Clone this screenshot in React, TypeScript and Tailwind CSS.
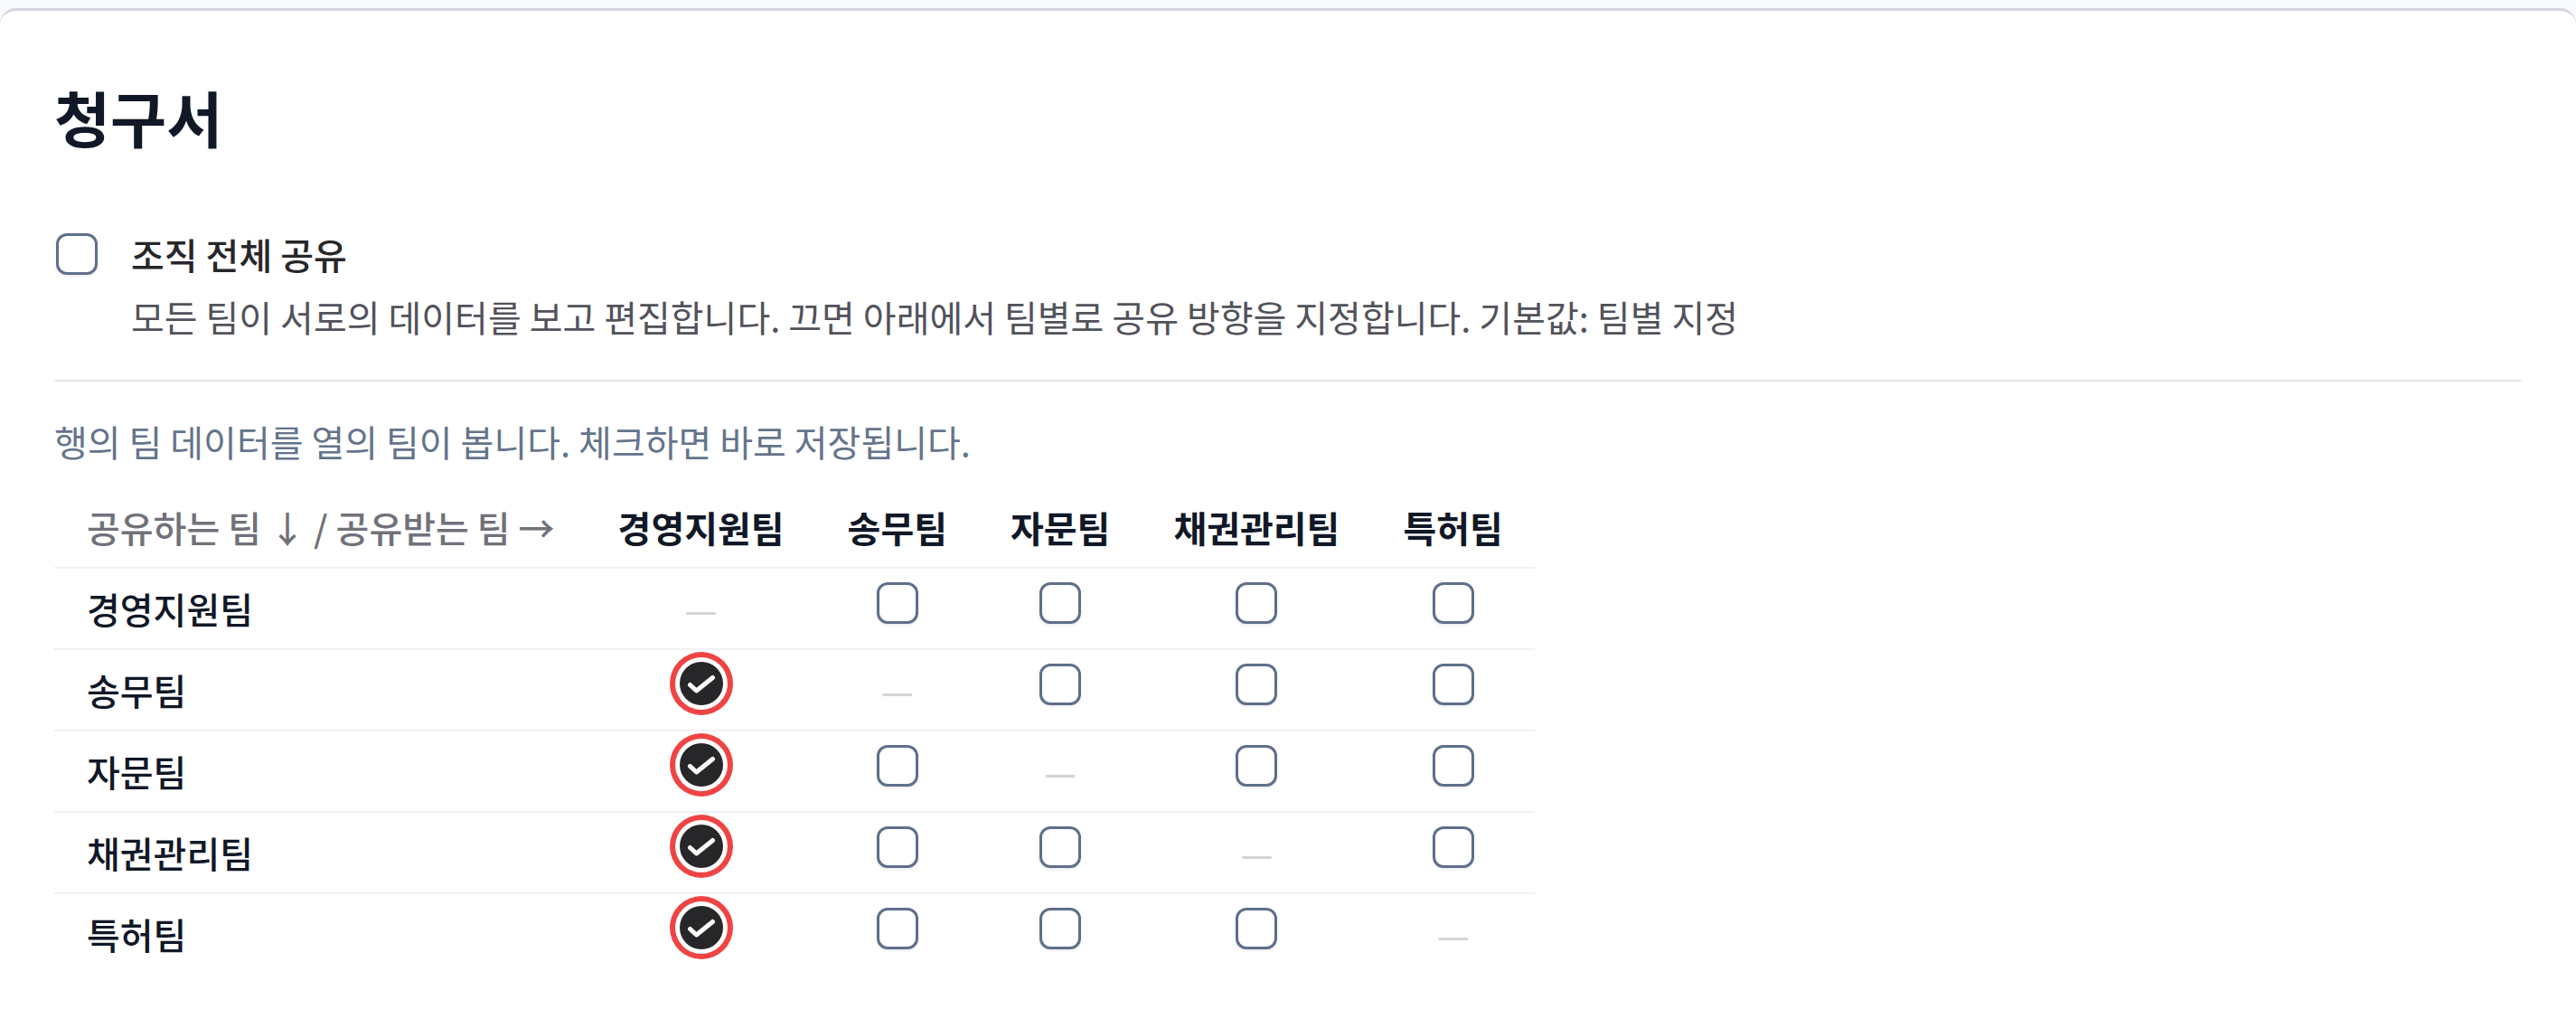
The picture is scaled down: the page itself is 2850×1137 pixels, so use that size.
const TEAMS = ['경영지원팀', '송무팀', '자문팀', '채권관리팀', '특허팀'];

// row team -> column teams it shares with
const CHECKED: Record<number, number[]> = {
  1: [0],
  2: [0],
  3: [0],
  4: [0],
};

function EmptyBox() {
  return (
    <span className="inline-block h-[46px] w-[46px] rounded-[12px] border-[3px] border-[#5f6f8b] bg-white shadow-[0_2px_3px_rgba(15,23,42,0.08)]" />
  );
}

function CheckedBox() {
  return (
    <span className="inline-block h-[48px] w-[48px] rounded-full bg-[#27272a] ring-[6px] ring-[#ef4444] ring-offset-[5px] ring-offset-white">
      <svg viewBox="0 0 48 48" className="block h-[48px] w-[48px]" fill="none">
        <path
          d="M11.5 25.5 18.5 32 36.5 17.5"
          stroke="white"
          strokeWidth="5"
          strokeLinecap="round"
          strokeLinejoin="round"
        />
      </svg>
    </span>
  );
}

export default function App() {
  const last = TEAMS.length - 1;
  return (
    <div className="min-h-screen bg-[#f8f9fb] pt-[9px] font-['Noto_Sans_CJK_KR','Noto_Sans',sans-serif]">
      <div className="min-h-[1128px] rounded-t-[18px] border-t-[3px] border-[#d1d5db] bg-white px-[60px] pt-[76px]">
        <h1 className="text-[67.5px] font-bold leading-[81px] text-[#111827]">청구서</h1>

        {/* org-wide sharing toggle */}
        <div className="mt-[81px] flex items-start gap-[37px] pl-[2px]">
          <span className="mt-[8px] shrink-0">
            <EmptyBox />
          </span>
          <div>
            <div className="text-[40px] font-medium leading-[63px] text-[#27272a]">조직 전체 공유</div>
            <p className="mt-[6px] text-[40px] leading-[63px] text-[#52525b]">
              모든 팀이 서로의 데이터를 보고 편집합니다. 끄면 아래에서 팀별로 공유 방향을 지정합니다. 기본값: 팀별 지정
            </p>
          </div>
        </div>

        <div className="mt-[38px] h-[2px] bg-[#e4e4e7]" />

        <p className="mt-[35px] text-[40px] leading-[63px] text-[#64748b]">
          행의 팀 데이터를 열의 팀이 봅니다. 체크하면 바로 저장됩니다.
        </p>

        <table className="mt-[20px] text-[40px] leading-[63px]">
          <thead>
            <tr>
              <th className="border-b-2 border-[#f1f1f3] pb-[12px] pl-[36px] pr-[35px] pt-[12px] text-left font-medium text-[#71717a]">
                공유하는 팀 ↓ / 공유받는 팀 →
              </th>
              {TEAMS.map((t) => (
                <th
                  key={t}
                  className="border-b-2 border-[#f1f1f3] px-[35px] pb-[12px] pt-[12px] text-center font-semibold text-[#111827]"
                >
                  {t}
                </th>
              ))}
            </tr>
          </thead>
          <tbody>
            {TEAMS.map((row, r) => (
              <tr key={row}>
                <td
                  className={`h-[90px] pl-[36px] pr-[35px] py-0 font-medium text-[#111827] ${
                    r < last ? 'border-b-2 border-[#f1f1f3]' : ''
                  }`}
                >
                  {row}
                </td>
                {TEAMS.map((col, c) => (
                  <td
                    key={col}
                    className={`h-[90px] px-[35px] py-0 text-center align-middle ${
                      r < last ? 'border-b-2 border-[#f1f1f3]' : ''
                    }`}
                  >
                    {r === c ? (
                      <span className="font-medium text-[#d4d4d8]">—</span>
                    ) : CHECKED[r]?.includes(c) ? (
                      <CheckedBox />
                    ) : (
                      <EmptyBox />
                    )}
                  </td>
                ))}
              </tr>
            ))}
          </tbody>
        </table>
      </div>
    </div>
  );
}
